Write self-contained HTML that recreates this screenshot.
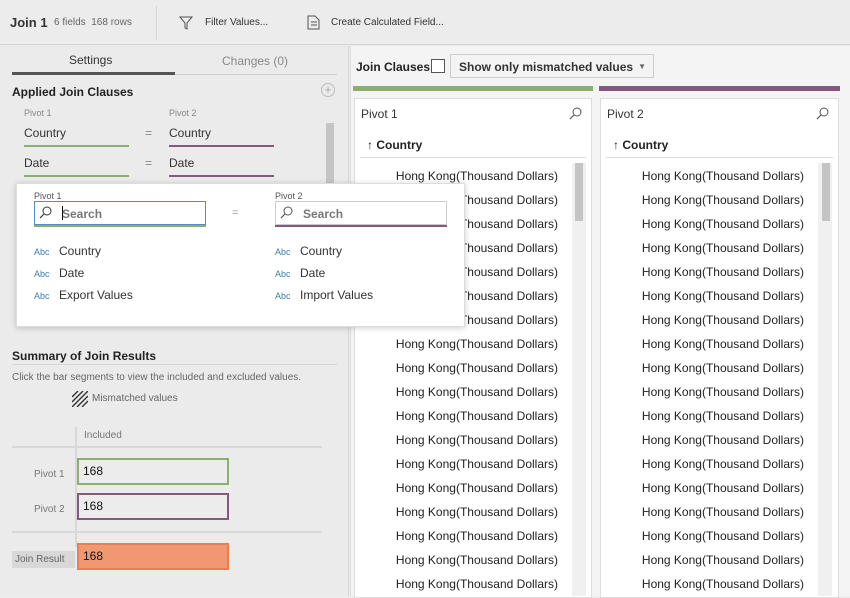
<!DOCTYPE html>
<html><head><style>
*{box-sizing:border-box;margin:0;padding:0}
body{width:850px;height:596px;overflow:hidden;background:#ececec;font-family:"Liberation Sans","DejaVu Sans",sans-serif;position:relative;color:#333}
.a{position:absolute}
.t{white-space:nowrap}
</style></head><body>
<div class="a" style="left:0;top:0;width:850px;height:45px;background:#ececec;border-bottom:1px solid #d4d4d4"></div>
<div class="a t" style="left:10px;top:15px;font-size:13px;font-weight:bold;color:#333">Join 1</div>
<div class="a t" style="left:54px;top:17px;font-size:10px;color:#666">6 fields&nbsp; 168 rows</div>
<div class="a" style="left:156px;top:6px;width:1px;height:34px;background:#d4d4d4"></div>
<svg class="a" style="left:179px;top:16px" width="14" height="14"><path d="M1 1 H13 L8 7 V13 L6 12 V7 Z" fill="none" stroke="#555" stroke-width="1"/></svg>
<div class="a t" style="left:205px;top:17px;font-size:10px;color:#333">Filter Values...</div>
<svg class="a" style="left:307px;top:15px" width="14" height="15"><path d="M1 1 H8 L12 5 V14 H1 Z M4 7 H10 M4 10 H10" fill="none" stroke="#555" stroke-width="1"/></svg>
<div class="a t" style="left:331px;top:17px;font-size:10px;color:#333">Create Calculated Field...</div>
<div class="a" style="left:0;top:46px;width:349px;height:550px;background:#ebebeb;border-right:1px solid #d8d8d8"></div>
<div class="a t" style="left:69px;top:53px;font-size:12px;color:#333">Settings</div>
<div class="a t" style="left:222px;top:54px;font-size:12px;color:#888">Changes (0)</div>
<div class="a" style="left:12px;top:74px;width:325px;height:1px;background:#d0d0d0"></div>
<div class="a" style="left:12px;top:72px;width:163px;height:3px;background:#555"></div>
<div class="a t" style="left:12px;top:85px;font-size:12px;font-weight:bold;color:#222">Applied Join Clauses</div>
<div class="a" style="left:321px;top:83px;width:14px;height:14px;border:1px solid #bbb;border-radius:50%;color:#aaa;font-size:13px;line-height:11px;text-align:center">+</div>
<div class="a t" style="left:24px;top:108px;font-size:9px;color:#888">Pivot 1</div>
<div class="a t" style="left:169px;top:108px;font-size:9px;color:#888">Pivot 2</div>
<div class="a t" style="left:24px;top:126px;font-size:12px;color:#333">Country</div>
<div class="a t" style="left:145px;top:126px;font-size:12px;color:#888">=</div>
<div class="a t" style="left:169px;top:126px;font-size:12px;color:#333">Country</div>
<div class="a" style="left:24px;top:145px;width:105px;height:2px;background:#8ab06c"></div>
<div class="a" style="left:169px;top:145px;width:105px;height:2px;background:#85587d"></div>
<div class="a t" style="left:24px;top:156px;font-size:12px;color:#333">Date</div>
<div class="a t" style="left:145px;top:156px;font-size:12px;color:#888">=</div>
<div class="a t" style="left:169px;top:156px;font-size:12px;color:#333">Date</div>
<div class="a" style="left:24px;top:175px;width:105px;height:2px;background:#8ab06c"></div>
<div class="a" style="left:169px;top:175px;width:105px;height:2px;background:#85587d"></div>
<div class="a" style="left:326px;top:123px;width:8px;height:62px;background:#c4c4c4"></div>
<div class="a t" style="left:12px;top:349px;font-size:12px;font-weight:bold;color:#222">Summary of Join Results</div>
<div class="a" style="left:12px;top:364px;width:325px;height:1px;background:#d4d4d4"></div>
<div class="a t" style="left:12px;top:372px;font-size:10px;color:#666">Click the bar segments to view the included and excluded values.</div>
<svg class="a" style="left:72px;top:391px" width="16" height="16"><path d="M0 6 L6 0 M0 11 L11 0 M0 16 L16 0 M5 16 L16 5 M10 16 L16 10" stroke="#333" stroke-width="1.4"/></svg>
<div class="a t" style="left:92px;top:393px;font-size:10px;color:#666">Mismatched values</div>
<div class="a" style="left:75px;top:427px;width:2px;height:120px;background:#d8d8d8"></div>
<div class="a t" style="left:84px;top:430px;font-size:10px;color:#777">Included</div>
<div class="a" style="left:12px;top:446px;width:310px;height:2px;background:#d8d8d8"></div>
<div class="a t" style="left:34px;top:469px;font-size:10px;color:#777">Pivot 1</div>
<div class="a" style="left:77px;top:458px;width:152px;height:27px;border:2px solid #8ab06c;background:#ececec;font-size:12px;color:#111;padding:4px 4px">168</div>
<div class="a t" style="left:34px;top:504px;font-size:10px;color:#777">Pivot 2</div>
<div class="a" style="left:77px;top:493px;width:152px;height:27px;border:2px solid #85587d;background:#ececec;font-size:12px;color:#111;padding:4px 4px">168</div>
<div class="a" style="left:12px;top:531px;width:310px;height:2px;background:#d8d8d8"></div>
<div class="a t" style="left:12px;top:551px;width:63px;height:17px;background:#d8d8d8;font-size:10px;color:#666;padding:3px 3px">Join Result</div>
<div class="a" style="left:77px;top:543px;width:152px;height:27px;border:2px solid #ec7d4f;background:#f19872;font-size:12px;color:#111;padding:4px 4px">168</div>
<div class="a" style="left:350px;top:46px;width:500px;height:550px;background:#f4f4f4;border-left:1px solid #ddd"></div>
<div class="a t" style="left:356px;top:60px;font-size:12px;font-weight:bold;color:#222">Join Clauses</div>
<div class="a" style="left:431px;top:59px;width:14px;height:14px;border:1px solid #555;background:#fff"></div>
<div class="a t" style="left:450px;top:54px;width:204px;height:24px;border:1px solid #ccc;background:#f4f4f4;font-size:12px;font-weight:bold;color:#333;padding:5px 8px">Show only mismatched values<span style="position:absolute;right:7px;top:7px;font-size:8px;color:#666">▼</span></div>
<div class="a" style="left:353px;top:86px;width:240px;height:5px;background:#8ab06c"></div>
<div class="a" style="left:599px;top:86px;width:241px;height:5px;background:#85587d"></div>
<div class="a" style="left:354px;top:98px;width:238px;height:500px;background:#fff;border:1px solid #ddd"></div>
<div class="a" style="left:600px;top:98px;width:239px;height:500px;background:#fff;border:1px solid #ddd"></div>
<div class="a t" style="left:361px;top:107px;font-size:12px;color:#333">Pivot 1</div>
<div class="a t" style="left:607px;top:107px;font-size:12px;color:#333">Pivot 2</div>
<svg class="a" style="left:569px;top:107px" width="13" height="13"><circle cx="8" cy="5" r="4" fill="none" stroke="#555" stroke-width="1"/><path d="M5 8 L1 12" stroke="#555" stroke-width="1.2"/></svg>
<svg class="a" style="left:816px;top:107px" width="13" height="13"><circle cx="8" cy="5" r="4" fill="none" stroke="#555" stroke-width="1"/><path d="M5 8 L1 12" stroke="#555" stroke-width="1.2"/></svg>
<div class="a t" style="left:367px;top:138px;font-size:12px;font-weight:bold;color:#222">↑ Country</div>
<div class="a t" style="left:613px;top:138px;font-size:12px;font-weight:bold;color:#222">↑ Country</div>
<div class="a" style="left:360px;top:157px;width:226px;height:1px;background:#ddd"></div>
<div class="a" style="left:606px;top:157px;width:227px;height:1px;background:#ddd"></div>
<div class="a" style="left:572px;top:163px;width:14px;height:433px;background:#f0f0f0"></div>
<div class="a" style="left:575px;top:163px;width:8px;height:58px;background:#c4c4c4"></div>
<div class="a" style="left:818px;top:163px;width:14px;height:433px;background:#f0f0f0"></div>
<div class="a" style="left:822px;top:163px;width:8px;height:58px;background:#c4c4c4"></div>
<div id="rows"></div>
<script>
var h='';for(var i=0;i<18;i++){var y=169+i*24;
h+='<div class="a t" style="left:360px;width:198px;text-align:right;top:'+y+'px;font-size:12px;color:#222">Hong Kong(Thousand Dollars)</div>';
h+='<div class="a t" style="left:606px;width:198px;text-align:right;top:'+y+'px;font-size:12px;color:#222">Hong Kong(Thousand Dollars)</div>';}
document.getElementById('rows').innerHTML=h;
</script>
<div class="a" style="left:16px;top:183px;width:449px;height:144px;background:#fff;border:1px solid #ddd;box-shadow:0 1px 6px rgba(0,0,0,0.2)"></div>
<div class="a t" style="left:34px;top:191px;font-size:9px;color:#555">Pivot 1</div>
<div class="a t" style="left:275px;top:191px;font-size:9px;color:#555">Pivot 2</div>
<div class="a" style="left:34px;top:201px;width:172px;height:24px;border:1px solid #4a90d0;background:#fff"></div>
<div class="a" style="left:34px;top:225px;width:172px;height:2px;background:#8ab06c"></div>
<div class="a" style="left:275px;top:201px;width:172px;height:24px;border:1px solid #ccc;background:#fff"></div>
<div class="a" style="left:275px;top:225px;width:172px;height:2px;background:#85587d"></div>
<svg class="a" style="left:39px;top:206px" width="13" height="13"><circle cx="8" cy="5" r="4" fill="none" stroke="#333" stroke-width="1"/><path d="M5 8 L1 12" stroke="#333" stroke-width="1.2"/></svg>
<svg class="a" style="left:280px;top:206px" width="13" height="13"><circle cx="8" cy="5" r="4" fill="none" stroke="#555" stroke-width="1"/><path d="M5 8 L1 12" stroke="#555" stroke-width="1.2"/></svg>
<div class="a" style="left:62px;top:206px;width:1px;height:14px;background:#000"></div>
<div class="a t" style="left:62px;top:207px;font-size:12px;font-weight:bold;color:#777">Search</div>
<div class="a t" style="left:303px;top:207px;font-size:12px;font-weight:bold;color:#777">Search</div>
<div class="a t" style="left:232px;top:207px;font-size:11px;color:#999">=</div>
<div class="a t" style="left:34px;top:247px;font-size:9px;color:#3a7fa8">Abc</div>
<div class="a t" style="left:59px;top:244px;font-size:12px;color:#333">Country</div>
<div class="a t" style="left:34px;top:269px;font-size:9px;color:#3a7fa8">Abc</div>
<div class="a t" style="left:59px;top:266px;font-size:12px;color:#333">Date</div>
<div class="a t" style="left:34px;top:291px;font-size:9px;color:#3a7fa8">Abc</div>
<div class="a t" style="left:59px;top:288px;font-size:12px;color:#333">Export Values</div>
<div class="a t" style="left:275px;top:247px;font-size:9px;color:#3a7fa8">Abc</div>
<div class="a t" style="left:300px;top:244px;font-size:12px;color:#333">Country</div>
<div class="a t" style="left:275px;top:269px;font-size:9px;color:#3a7fa8">Abc</div>
<div class="a t" style="left:300px;top:266px;font-size:12px;color:#333">Date</div>
<div class="a t" style="left:275px;top:291px;font-size:9px;color:#3a7fa8">Abc</div>
<div class="a t" style="left:300px;top:288px;font-size:12px;color:#333">Import Values</div>
</body></html>
